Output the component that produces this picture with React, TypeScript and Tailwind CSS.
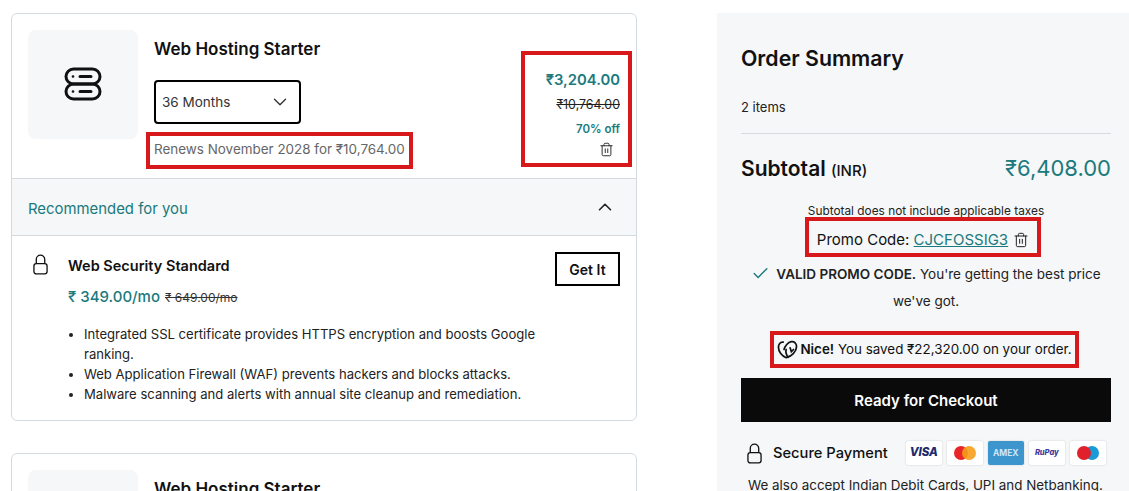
import { Check, ChevronDown, ChevronUp, Trash2 } from 'lucide-react'

const fontStack = 'font-["Inter","Noto_Sans",sans-serif]'

function ServerIcon() {
  return (
    <svg viewBox="0 0 38 34" className="h-[34px] w-[38px]" fill="none" stroke="#111" strokeWidth="3" strokeLinecap="round">
      <rect x="2" y="2" width="34" height="15" rx="7.5" />
      <rect x="2" y="17" width="34" height="15" rx="7.5" />
      <path d="M16 9.5h11M16 24.5h11" />
      <circle cx="9" cy="9.5" r="0.6" fill="#111" strokeWidth="1.5" />
      <circle cx="9" cy="24.5" r="0.6" fill="#111" strokeWidth="1.5" />
    </svg>
  )
}

function LockIcon() {
  return (
    <svg viewBox="0 0 16 22" className="h-[21px] w-[15px] shrink-0" fill="none" stroke="#111" strokeWidth="1.4">
      <path d="M3.5 10V5.5a4.5 4.5 0 0 1 9 0V10" />
      <rect x="1" y="10" width="14" height="11" rx="2.5" />
    </svg>
  )
}

function GoLogo() {
  return (
    <svg viewBox="0 0 24 22" className="h-[19px] w-[21px] shrink-0" fill="none" stroke="#111" strokeWidth="2" strokeLinecap="round">
      <path d="M7 2.5C3.5 2 1.5 5 1.5 8.5c0 5 4 10 9 12 6-1.5 12-7 12-13 0-3.5-2.5-6-6-5.5-4 .5-7.5 5-8.5 9" />
      <path d="M12.5 20c-2-3-3-6-2-9M15 9l1.5 4.5L19 11" />
    </svg>
  )
}

function PayCard({ children, blue }: { children: React.ReactNode; blue?: boolean }) {
  return (
    <div className={`flex h-[24px] w-[36px] items-center justify-center rounded-[2px] shadow-[0_0_2px_rgba(0,0,0,0.2)] ${blue ? 'bg-[#3d95ce]' : 'bg-white'}`}>
      {children}
    </div>
  )
}

export default function App() {
  return (
    <div className={`flex h-[491px] w-[1129px] gap-[80px] overflow-hidden bg-white pl-[11px] pt-[13px] text-[#111] ${fontStack}`}>
      <div className="flex w-[626px] shrink-0 flex-col gap-[32px]">
        <div className="h-[408px] shrink-0 rounded-md border border-[#d4dbe0]">
          <div className="flex h-[164px] pl-[16px] pt-[16px]">
            <div className="flex h-[109px] w-[110px] shrink-0 items-center justify-center rounded-lg bg-[#f5f7f8] pb-[2px]">
              <ServerIcon />
            </div>
            <div className="ml-[8px] flex flex-col items-start">
              <div className="ml-[8px] text-[17px] leading-[38px] font-semibold">Web Hosting Starter</div>
              <div className="ml-[8px] mt-[12px] flex h-[44px] w-[147px] items-center justify-between rounded-[4px] border-2 border-black pl-[6px] pr-[8px] text-[13.5px] text-[#333]">
                36 Months
                <ChevronDown className="size-[22px]" strokeWidth={1.5} />
              </div>
              <div className="mt-[8px] flex h-[37px] w-[267px] items-center border-4 border-[#d7191c] pb-[2px] pl-[4px] text-[13.45px] whitespace-nowrap text-[#666]">
                Renews November 2028 for ₹10,764.00
              </div>
            </div>
            <div className="ml-auto mr-[4px] mt-[21px] flex h-[116px] w-[111px] flex-col items-end border-4 border-[#d7191c] pr-[8px] pt-[14px]">
              <div className="text-[14.8px] leading-[22px] font-semibold text-[#1a7a7d]">₹3,204.00</div>
              <div className="mt-[4px] text-[12.4px] leading-[20px] text-[#222] line-through">₹10,764.00</div>
              <div className="mt-[5px] text-[11.5px] leading-[18px] font-semibold text-[#1a7a7d]">70% off</div>
              <Trash2 className="mr-[6px] mt-[4px] size-[15px] text-[#222]" strokeWidth={1.5} />
            </div>
          </div>
          <div className="flex h-[58px] items-center justify-between border-y border-[#d4dbe0] bg-[#f5f7f8] pl-[16px] pr-[20px]">
            <span className="mt-[5px] text-[14.9px] text-[#1a7a7d]">Recommended for you</span>
            <ChevronUp className="size-[22px] text-[#222]" strokeWidth={1.75} />
          </div>
          <div className="flex pl-[21px] pr-[16px] pt-[16px]">
            <div className="mt-[2px]"><LockIcon /></div>
            <div className="ml-[20px] flex-1">
              <div className="mt-[4px] text-[14.5px] leading-[20px] font-semibold">Web Security Standard</div>
              <div className="mt-[10px] flex items-baseline gap-[5px]">
                <span className="text-[15px] leading-[22px] font-medium text-[#1a7a7d]">₹ 349.00/mo</span>
                <span className="text-[12px] text-[#333] line-through">₹ 649.00/mo</span>
              </div>
              <ul className="mt-[16px] w-[480px] list-disc pl-[16px] text-[13.08px] leading-[20px] text-[#222]">
                <li>Integrated SSL certificate provides HTTPS encryption and boosts Google ranking.</li>
                <li>Web Application Firewall (WAF) prevents hackers and blocks attacks.</li>
                <li>Malware scanning and alerts with annual site cleanup and remediation.</li>
              </ul>
            </div>
            <div className="flex h-[34px] w-[65px] items-center justify-center border-2 border-black text-[14px] font-semibold">Get It</div>
          </div>
        </div>
        <div className="flex h-[200px] shrink-0 rounded-md border border-[#d4dbe0] pl-[16px] pt-[16px]">
          <div className="h-[109px] w-[110px] rounded-lg bg-[#f5f7f8]" />
          <div className="ml-[16px] text-[17px] leading-[38px] font-semibold">Web Hosting Starter</div>
        </div>
      </div>

      <div className="flex h-[600px] w-[412px] shrink-0 flex-col bg-[#f5f7f8] pl-[24px] pr-[18px]">
        <div className="mt-[30px] text-[21.3px] leading-[30px] font-semibold">Order Summary</div>
        <div className="mt-[24px] text-[13px] leading-[20px] text-[#222]">2 items</div>
        <div className="mt-[16px] h-px bg-[#d4dbe0]" />
        <div className="mt-[19px] flex items-baseline justify-between leading-[30px]">
          <span className="text-[21px] font-semibold">Subtotal <span className="text-[15px] font-medium">(INR)</span></span>
          <span className="text-[22px] text-[#1a7a7d]">₹6,408.00</span>
        </div>
        <div className="mt-[18px] flex flex-col items-center">
          <div className="text-[11.85px] leading-[14px] text-[#222]">Subtotal does not include applicable taxes</div>
          <div className="mr-[6px] mt-[-1px] flex h-[40px] w-[236px] items-center justify-center gap-[5px] border-4 border-[#d7191c] pt-[6px] text-[15px] whitespace-nowrap">
            <span>Promo Code: <span className="text-[#1a7a7d] underline">CJCFOSSIG3</span></span>
            <Trash2 className="size-[16px] text-[#222]" strokeWidth={1.5} />
          </div>
          <div className="mt-[4px] w-[370px] text-center text-[13.5px] leading-[27px] text-[#222]">
            <Check className="mr-[6px] inline size-[19px] align-[-4px] text-[#1a7a7d]" strokeWidth={1.75} />
            <span className="font-semibold">VALID PROMO CODE.</span> You're getting the best price we've got.
          </div>
          <div className="mr-[3px] mt-[16px] flex h-[37px] w-[309px] items-center justify-center border-4 border-[#d7191c] text-[13.4px] whitespace-nowrap">
            <GoLogo />
            <span className="ml-[2px] font-semibold">Nice!</span>&nbsp;You saved ₹22,320.00 on your order.
          </div>
        </div>
        <div className="mt-[10px] flex h-[44px] items-center justify-center bg-[#0a0a0a] pt-[3px] text-[15px] font-semibold text-white">Ready for Checkout</div>
        <div className="mt-[19px] flex items-center pl-[6px]">
          <LockIcon />
          <span className="ml-[11px] text-[14.7px] font-medium">Secure Payment</span>
          <div className="ml-[18px] flex gap-[5px]">
            <PayCard><span className="text-[11.5px] font-extrabold text-[#1a2a6c] italic">VISA</span></PayCard>
            <PayCard>
              <svg viewBox="0 0 24 16" className="w-[24px]"><circle cx="8" cy="8" r="7" fill="#e8262a" /><circle cx="16" cy="8" r="7" fill="#f79e1b" fillOpacity="0.9" /></svg>
            </PayCard>
            <PayCard blue><span className="text-[8.5px] font-bold text-[#cfe6f5]">AMEX</span></PayCard>
            <PayCard><span className="text-[7.5px] font-extrabold text-[#3a3a9c] italic">RuPay</span></PayCard>
            <PayCard>
              <svg viewBox="0 0 24 16" className="w-[24px]"><circle cx="16" cy="8" r="7" fill="#1a9ad6" /><circle cx="8" cy="8" r="7" fill="#e0202a" /></svg>
            </PayCard>
          </div>
        </div>
        <div className="mt-[10px] pl-[7px] text-[13.4px] leading-[20px] whitespace-nowrap text-[#222]">We also accept Indian Debit Cards, UPI and Netbanking.</div>
      </div>
    </div>
  )
}
